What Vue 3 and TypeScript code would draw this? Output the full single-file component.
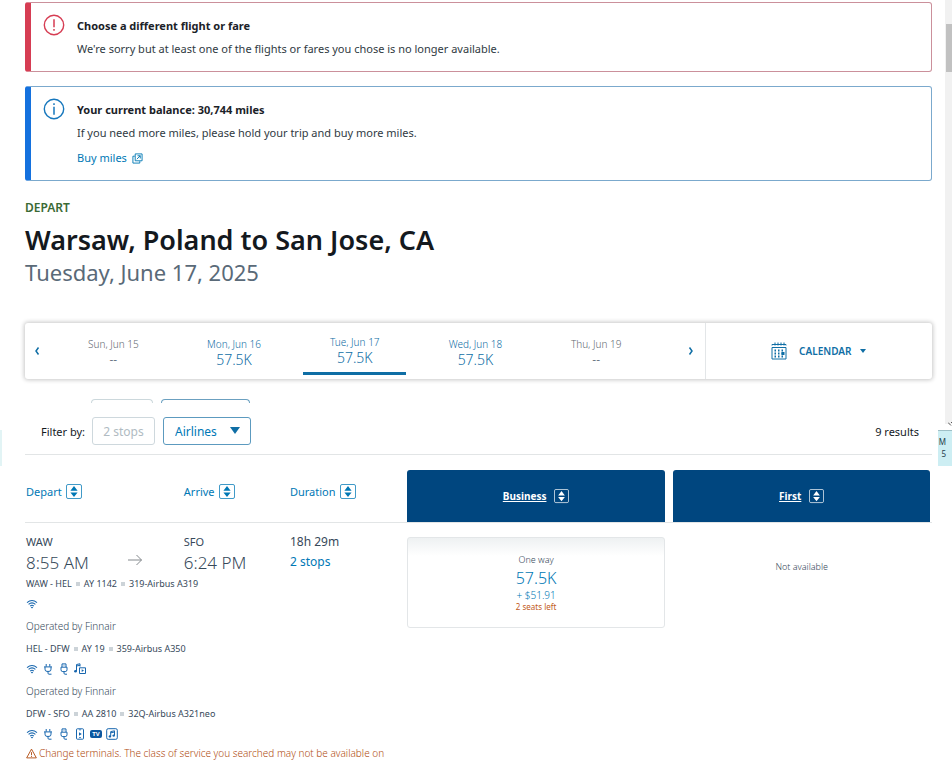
<script setup lang="ts">
import { ref } from 'vue'

interface FareDate {
  label: string
  miles: string | null
}

interface Segment {
  route: string
  flight: string
  aircraft: string
  amenities: string[]
  operator: string | null
}

const dates: FareDate[] = [
  { label: 'Sun, Jun 15', miles: null },
  { label: 'Mon, Jun 16', miles: '57.5K' },
  { label: 'Tue, Jun 17', miles: '57.5K' },
  { label: 'Wed, Jun 18', miles: '57.5K' },
  { label: 'Thu, Jun 19', miles: null },
]
const selected = ref(2)
const airline = ref('Airlines')

const segments: Segment[] = [
  { route: 'WAW - HEL', flight: 'AY 1142', aircraft: '319-Airbus A319', amenities: ['wifi'], operator: 'Finnair' },
  { route: 'HEL - DFW', flight: 'AY 19', aircraft: '359-Airbus A350', amenities: ['wifi', 'plug', 'usb', 'media'], operator: 'Finnair' },
  { route: 'DFW - SFO', flight: 'AA 2810', aircraft: '32Q-Airbus A321neo', amenities: ['wifi', 'plug', 'usb', 'device', 'tv', 'music'], operator: null },
]
const sortable: string[] = ['Depart', 'Arrive', 'Duration']
const cabins: string[] = ['Business', 'First']
</script>

<template>
  <div class="page">
    <svg class="defs" aria-hidden="true">
      <symbol id="wifi" viewBox="0 0 12 12">
        <path d="M1 4.600Q6 .4 11 4.600M2.600 6.400Q6 3.400 9.400 6.400M4.200 8.100Q6 6.500 7.800 8.100" fill="none" stroke="currentColor" stroke-width="1.100" />
        <path d="M4.800 9.200Q6 8.200 7.200 9.200L6 10.600Z" fill="currentColor" />
      </symbol>
      <symbol id="plug" viewBox="0 0 12 12">
        <path d="M4.200 1v2.600M7.800 1v2.600M2 3.900h8M3 4v2.200Q3 8.400 5 8.400h2Q9 8.400 9 6.200V4M6 8.600v1.600q0 1 1 1h2.500" fill="none" stroke="currentColor" />
      </symbol>
      <symbol id="usb" viewBox="0 0 12 12">
        <path d="M4 4V.9h4V4M5.400 2.400h.3M6.500 2.400h.3M3 4.200h6v2.600q0 1.800-1.800 1.800H4.800Q3 8.600 3 6.800ZM6 8.600v1.600q0 1 1 1h2" fill="none" stroke="currentColor" />
      </symbol>
      <symbol id="media" viewBox="0 0 12 12">
        <path d="M2.500 8V1.500L6 .8v2.700M2.500 3 6 2.300M5.500 4.800h6v5.700h-6Z" fill="none" stroke="currentColor" />
        <ellipse cx="1.500" cy="8.300" rx="1.400" ry="1.200" fill="currentColor" />
        <path d="M7.700 6.200v2.900L10 7.600Z" fill="currentColor" />
      </symbol>
      <symbol id="device" viewBox="0 0 12 12">
        <rect x="2.500" y=".8" width="7" height="10.400" rx=".8" fill="none" stroke="currentColor" />
        <path d="M5 4.200v3.600L7.800 6ZM5 9.300h2v.8H5ZM5 1.600h2v.6H5Z" fill="currentColor" />
      </symbol>
      <symbol id="music" viewBox="0 0 12 12">
        <rect x=".7" y=".7" width="10.600" height="10.600" rx="1.500" fill="none" stroke="currentColor" />
        <path d="M4.700 8.300V3.600l3.800-.8v4.700M4.700 4.800l3.800-.8" fill="none" stroke="currentColor" />
        <circle cx="3.900" cy="8.400" r="1.200" fill="currentColor" />
        <circle cx="7.700" cy="7.600" r="1.200" fill="currentColor" />
      </symbol>
      <symbol id="sort" viewBox="0 0 16 16">
        <rect x=".5" y=".5" width="15" height="14" rx="1.500" fill="none" stroke="currentColor" stroke-opacity=".75" />
        <path d="M8 2 11.600 6.800H4.400ZM8 13 4.400 8.400h7.200Z" fill="currentColor" />
      </symbol>
    </svg>

    <div class="scroll-track" aria-hidden="true"><div class="scroll-thumb"></div></div>
    <div class="edge edge-left" aria-hidden="true"></div>
    <div class="edge edge-right"><span>M</span><span>5</span></div>
    <svg class="edge-tick" viewBox="0 0 4 4" aria-hidden="true"><path d="M0 .5 3 3.500M3 .5h1" stroke="#555" fill="none" /></svg>

    <section class="notice error">
      <svg class="notice-icon" viewBox="0 0 22 22" aria-hidden="true">
        <circle cx="11" cy="11" r="9.700" fill="none" stroke="currentColor" stroke-width="1.400" />
        <path d="M11 5.200v8M11 15v1.800" stroke="currentColor" stroke-width="1.500" />
      </svg>
      <div>
        <h2>Choose a different flight or fare</h2>
        <p>We're sorry but at least one of the flights or fares you chose is no longer available.</p>
      </div>
    </section>

    <section class="notice info">
      <svg class="notice-icon" viewBox="0 0 22 22" aria-hidden="true">
        <circle cx="11" cy="11" r="9.700" fill="none" stroke="currentColor" stroke-width="1.400" />
        <path d="M11 8.800v8M11 5.200V7" stroke="currentColor" stroke-width="1.500" />
      </svg>
      <div>
        <h2>Your current balance: 30,744 miles</h2>
        <p>If you need more miles, please hold your trip and buy more miles.</p>
        <a class="buy" href="#buy">Buy miles
          <svg viewBox="0 0 12 12" aria-hidden="true">
            <path d="M3.500 1h7.500v7.500H3.500ZM3 3.500H1V11h7.500V9M5.300 6.700 9 3M6 3h3v3" fill="none" stroke="currentColor" />
          </svg>
        </a>
      </div>
    </section>

    <header class="trip">
      <div class="leg">DEPART</div>
      <h1>Warsaw, Poland to San Jose, CA</h1>
      <div class="day">Tuesday, June 17, 2025</div>
    </header>

    <div class="date-strip">
      <div class="dates">
        <button class="nav" aria-label="Previous dates">
          <svg viewBox="0 0 6 10" aria-hidden="true"><path d="M4.500 1.500 2 5l2.500 3.500" fill="none" stroke="currentColor" stroke-width="1.500" /></svg>
        </button>
        <button
          v-for="(d, i) in dates"
          :key="d.label"
          class="date"
          :class="{ active: i === selected, empty: !d.miles }"
          :disabled="!d.miles"
          @click="selected = i"
        >
          <span class="date-label">{{ d.label }}</span>
          <span class="date-miles">{{ d.miles ?? '--' }}</span>
        </button>
        <button class="nav next" aria-label="Next dates">
          <svg viewBox="0 0 6 10" aria-hidden="true"><path d="M1.500 1.500 4 5 1.500 8.500" fill="none" stroke="currentColor" stroke-width="1.500" /></svg>
        </button>
      </div>
      <button class="calendar">
        <svg class="cal-icon" viewBox="0 0 16 18" aria-hidden="true">
          <path d="M1 3.500V2.500h14v1M1 5.500h14v11.500H1ZM4 .5v3M7 .5v3M10 .5v3M13 .5v3" fill="none" stroke="currentColor" />
          <path d="M3.500 8.500h9M3.500 11.500h9M3.500 14.500h9" stroke="currentColor" stroke-width="2" stroke-dasharray="1.500 2" />
          <path d="M10.500 10h3v3h-3Z" fill="currentColor" />
        </svg>
        <span>CALENDAR</span>
        <svg class="caret" viewBox="0 0 6 4" aria-hidden="true"><path d="M0 0h6L3 4Z" fill="currentColor" /></svg>
      </button>
    </div>

    <div class="ghosts" aria-hidden="true">
      <span class="ghost"></span>
      <span class="ghost wide"></span>
    </div>

    <div class="filters">
      <span class="filter-title">Filter by:</span>
      <button class="stops" disabled>2 stops</button>
      <div class="select-wrap">
        <select v-model="airline" aria-label="Airlines">
          <option>Airlines</option>
        </select>
        <svg viewBox="0 0 10 7" aria-hidden="true"><path d="M0 0h10L5 7Z" fill="currentColor" /></svg>
      </div>
      <span class="count">9 results</span>
    </div>

    <table class="results">
      <colgroup>
        <col class="c-depart" /><col class="c-arrive" /><col class="c-duration" /><col /><col />
      </colgroup>
      <thead>
        <tr>
          <th v-for="s in sortable" :key="s" scope="col" class="plain">
            <button class="sort">{{ s }}<svg aria-hidden="true"><use href="#sort" /></svg></button>
          </th>
          <th v-for="(c, i) in cabins" :key="c" scope="col" class="fare" :class="{ last: i === 1 }">
            <div class="cabin">
              <a href="#cabin">{{ c }}</a>
              <button class="cabin-sort" :aria-label="'Sort by ' + c"><svg aria-hidden="true"><use href="#sort" /></svg></button>
            </div>
          </th>
        </tr>
      </thead>
      <tbody>
        <tr>
          <td class="point">
            <div class="depart-cell">
              <div>
                <div class="code">WAW</div>
                <div class="time">8:55 AM</div>
              </div>
              <svg class="arrow" viewBox="0 0 16 12" aria-hidden="true"><path d="M1 6h13.500M9.500 1l5 5-5 5" fill="none" stroke="currentColor" /></svg>
            </div>
          </td>
          <td class="point">
            <div class="code">SFO</div>
            <div class="time">6:24 PM</div>
          </td>
          <td class="point">
            <div class="length">18h 29m</div>
            <a class="length" href="#stops">2 stops</a>
          </td>
          <td rowspan="2" class="fare">
            <button class="price">
              <span class="way">One way</span>
              <span class="miles">57.5K</span>
              <span class="tax">+ $51.91</span>
              <span class="left">2 seats left</span>
            </button>
          </td>
          <td rowspan="2" class="fare last"><div class="none">Not available</div></td>
        </tr>
        <tr>
          <td colspan="3" class="details">
            <div v-for="s in segments" :key="s.flight">
              <div class="segment">
                <span>{{ s.route }}</span><i></i><span>{{ s.flight }}</span><i></i><span>{{ s.aircraft }}</span>
              </div>
              <div class="amenities">
                <template v-for="a in s.amenities" :key="a">
                  <span v-if="a === 'tv'" class="tv">TV</span>
                  <svg v-else aria-hidden="true"><use :href="'#' + a" /></svg>
                </template>
              </div>
              <div v-if="s.operator" class="operator">Operated by {{ s.operator }}</div>
            </div>
            <div class="warning">
              <svg viewBox="0 0 12 12" aria-hidden="true"><path d="M6 1.200 11.300 10.800H.7ZM6 4.500v3.200M6 8.500v1.200" fill="none" stroke="currentColor" /></svg>
              <span>Change terminals. The class of service you searched may not be available on</span>
            </div>
          </td>
        </tr>
      </tbody>
    </table>
  </div>
</template>

<style>
body {
  background: #fff;
}
</style>

<style scoped>
.page {
  position: relative;
  box-sizing: border-box;
  padding: 2px 20px 20px 25px;
  overflow: hidden;
  font-family: "Noto Sans", "Open Sans", sans-serif;
  font-size: 11px;
  color: #36495a;
}
.page *, .page *::before { box-sizing: border-box; }
.defs { position: absolute; width: 0; height: 0; }
button, select { font: inherit; color: inherit; background: none; border: 0; padding: 0; margin: 0; }
a { color: #0078b5; text-decoration: none; }
h1, h2, p { margin: 0; }
svg { display: block; flex: none; }

.scroll-track { position: absolute; top: 0; right: 0; width: 7px; height: 424px; background: #f1f1f1; }
.scroll-thumb { margin: 24px 0 0 1px; height: 48px; background: #c1c1c1; }
.edge { position: absolute; top: 430px; height: 36px; background: #cdeef3; }
.edge-left { left: 0; width: 2px; background: #e2f4f5; }
.edge-right {
  right: 0; width: 14px; padding: 5px 6px 0 0; border-top: 1px solid #9ebfc6;
  display: flex; flex-direction: column; align-items: flex-end;
  font-size: 8px; line-height: 12px; color: #24404c;
}
.edge-tick { position: absolute; top: 422px; right: 0; width: 4px; height: 4px; }

.notice {
  display: flex;
  gap: 12px;
  min-height: 70px;
  padding: 11px 16px 11px 12px;
  border: 1px solid #cb909b;
  border-left: 6px solid #d63d53;
  border-radius: 3px;
}
.notice.info { min-height: 95px; margin-top: 14px; border-color: #7ba9cd; border-left-color: #1471de; }
.notice-icon { width: 22px; height: 22px; color: #d63d53; }
.info .notice-icon { color: #1677bd; }
.notice h2 { font-size: 11px; line-height: 24px; font-weight: 700; color: #1b2228; }
.notice p { line-height: 22px; color: #303a42; }
.buy { display: inline-flex; align-items: center; gap: 5px; margin-top: 4px; line-height: 20px; }
.buy svg { width: 11px; height: 11px; }

.trip { margin-top: 17px; }
.leg { font-size: 12px; line-height: 20px; font-weight: 600; color: #3a6a35; }
h1 { margin-top: 4px; font-size: 27px; line-height: 36px; font-weight: 600; color: #14191e; }
.day { font-size: 22px; line-height: 28px; font-weight: 400; color: #5a6a78; }

.date-strip {
  display: flex;
  margin-top: 37px;
  height: 56px;
  border-radius: 3px;
  background: #fff;
  box-shadow: 0 0 4px 1px rgba(0, 0, 0, .22);
}
.dates { flex: 3; display: flex; border-right: 1px solid #e3e6e8; color: #0f6ea5; }
.nav { flex: none; width: 28px; display: flex; align-items: center; justify-content: center; }
.nav svg { width: 6px; height: 10px; }
.nav:first-child { padding-right: 4px; }
.nav.next { margin-left: 20px; }
.date { position: relative; flex: 1; display: flex; flex-direction: column; justify-content: center; align-items: center; padding-top: 4px; }
.date-label { font-size: 10px; line-height: 14px; font-weight: 300; }
.date-miles { font-size: 14px; line-height: 18px; font-weight: 300; }
.date.empty { color: #5f6a72; }
.empty .date-miles { font-size: 12px; color: #36495a; }
.date.active { padding-top: 0; }
.date.active::after { content: ""; position: absolute; left: 9px; right: 9px; bottom: 4px; height: 3px; background: #0f6ea5; }
.calendar { flex: 1; display: flex; align-items: center; justify-content: center; color: #0f6ea5; font-size: 10px; font-weight: 600; }
.cal-icon { width: 16px; height: 18px; margin-right: 12px; }
.caret { width: 6px; height: 4px; margin-left: 9px; }

.ghosts { display: flex; gap: 8px; margin: 20px 0 0 66px; height: 5px; }
.ghost { width: 62px; height: 4px; border: 1px solid #ccd8dc; border-bottom: 0; border-radius: 4px 4px 0 0; }
.ghost.wide { width: 89px; border-color: #6ba0c0; }

.filters { display: flex; align-items: center; margin-top: 13px; padding: 0 13px 9px 16px; border-bottom: 1px solid #e2e5e6; color: #14191e; }
.filter-title { width: 51px; white-space: nowrap; }
.stops { height: 28px; width: 63px; border: 1px solid #ced8dd; border-radius: 3px; color: #b0bbc2; font-size: 12px; }
.select-wrap { position: relative; margin-left: 8px; color: #0078b5; font-size: 12px; }
.select-wrap select { appearance: none; display: block; width: 88px; height: 28px; padding: 0 24px 0 11px; border: 1px solid #5c9abf; border-radius: 3px; }
.select-wrap svg { position: absolute; right: 11px; top: 10px; width: 10px; height: 7px; color: #0f6ea5; pointer-events: none; }
.count { margin-left: auto; }

.results { width: 100%; margin-top: 15px; border-collapse: separate; border-spacing: 0; table-layout: fixed; }
.c-depart { width: 17.4%; }
.c-arrive { width: 11.7%; }
.c-duration { width: 13%; }
th, td { padding: 0; text-align: left; vertical-align: top; font-weight: 400; }
th { height: 53px; border-bottom: 1px solid #e2e5e6; }
th.plain { padding: 11px 0 0 1px; }
.sort { display: flex; align-items: center; gap: 4px; color: #0078b5; line-height: 22px; }
.sort svg { width: 16px; height: 16px; }
.fare { padding-right: 4px; }
.fare.last { padding: 0 2px 0 4px; }
.cabin { display: flex; align-items: center; justify-content: center; gap: 8px; height: 52px; border-radius: 3px 3px 0 0; background: #00467f; }
.cabin a { color: #fff; font-size: 10px; font-weight: 700; text-decoration: underline; }
.cabin-sort { color: #fff; }
.cabin-sort svg { width: 15px; height: 15px; }

td.point { padding: 9px 0 0 1px; }
.depart-cell { display: flex; align-items: flex-end; justify-content: space-between; padding-right: 40px; }
.code { font-size: 11px; line-height: 20px; }
.time { font-size: 17px; line-height: 22px; font-weight: 300; white-space: nowrap; }
.arrow { width: 16px; height: 12px; margin-bottom: 8px; color: #84898d; }
.length { display: block; font-size: 12px; line-height: 20px; }
.details { padding-left: 1px; }
.segment { display: flex; align-items: center; gap: 4px; font-size: 9px; line-height: 20px; white-space: nowrap; }
.segment i { width: 4px; height: 4px; background: #ccd3d8; }
.amenities { display: flex; align-items: center; gap: 4px; height: 20px; color: #1766ae; }
.amenities svg { width: 12px; height: 12px; }
.tv { width: 12px; height: 8px; border-radius: 2px; background: #0b57a0; color: #fff; font-size: 6px; line-height: 8px; font-weight: 700; text-align: center; }
.operator { height: 25px; font-size: 10px; line-height: 25px; font-weight: 300; }
.warning { display: flex; align-items: center; gap: 2px; font-size: 10px; line-height: 18px; font-weight: 300; color: #b04c10; white-space: nowrap; }
.warning svg { width: 11px; height: 11px; }

.price {
  display: flex; flex-direction: column; align-items: center;
  width: 100%; min-height: 91px; margin-top: 14px; padding: 16px 0 12px;
  border: 1px solid #e3e6e8; border-radius: 3px;
  background: linear-gradient(#eef1f2, #fff 18px);
}
.way { font-size: 9px; line-height: 12px; font-weight: 300; }
.miles { font-size: 16px; line-height: 24px; font-weight: 300; color: #0078b5; }
.tax { font-size: 10px; line-height: 11px; font-weight: 300; color: #0078b5; }
.left { font-size: 8px; line-height: 11px; color: #c25a20; }
.none { margin-top: 37px; font-size: 9px; line-height: 14px; font-weight: 300; text-align: center; }
</style>
